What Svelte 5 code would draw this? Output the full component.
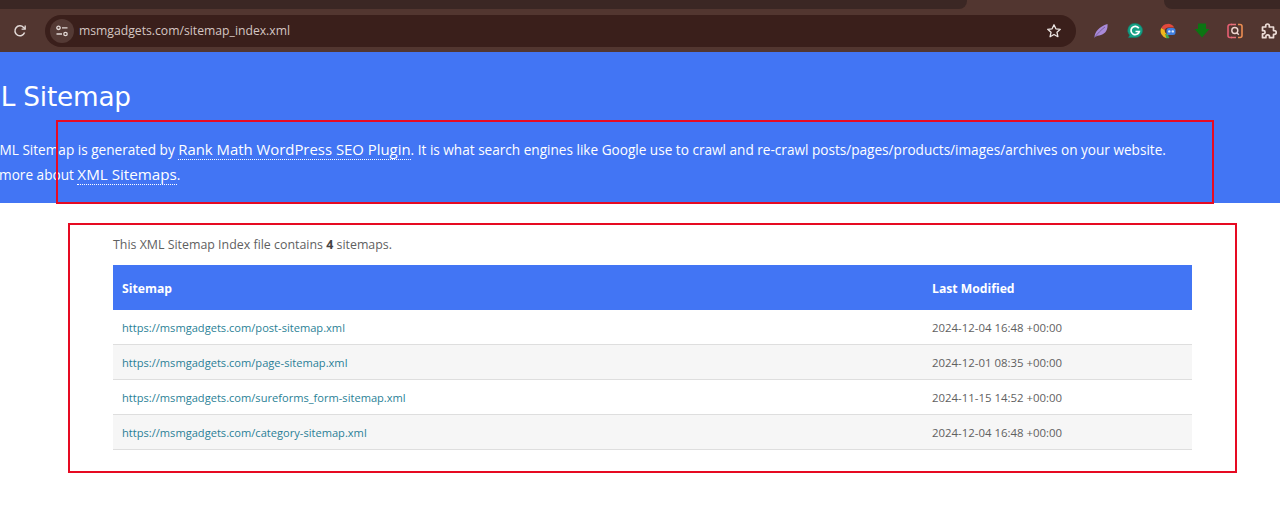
<script>
  const rows = [
    { url: 'https://msmgadgets.com/post-sitemap.xml', date: '2024-12-04 16:48 +00:00' },
    { url: 'https://msmgadgets.com/page-sitemap.xml', date: '2024-12-01 08:35 +00:00' },
    { url: 'https://msmgadgets.com/sureforms_form-sitemap.xml', date: '2024-11-15 14:52 +00:00' },
    { url: 'https://msmgadgets.com/category-sitemap.xml', date: '2024-12-04 16:48 +00:00' },
  ];
</script>

<div class="page">
  <div class="tabstrip">
    <span class="tab tab-a"></span>
    <span class="tab tab-b"></span>
  </div>

  <div class="toolbar">
    <svg class="reload" width="16" height="16" viewBox="0 0 16 16" fill="none" stroke="#e2d9d6" stroke-width="1.5">
      <path d="M12.6 9.6A5 5 0 1 1 11.6 4.4L13 5.8" />
      <path d="M13.2 2.6v3.6H9.6" stroke-width="1.3" />
    </svg>

    <div class="omnibox">
      <span class="tune">
        <svg width="16" height="16" viewBox="0 0 16 16" fill="none" stroke="#e2d9d6" stroke-width="1.3">
          <circle cx="4.5" cy="4.8" r="1.7" />
          <path d="M8 4.8h5.5M2.5 11h5.5" />
          <circle cx="11.5" cy="11" r="1.7" />
        </svg>
      </span>
      <span class="address">msmgadgets.com/sitemap_index.xml</span>
      <svg class="star" width="16" height="16" viewBox="0 0 16 16" fill="none" stroke="#eee7e4" stroke-width="1.3">
        <path d="M8 1.8l1.9 4 4.4.5-3.3 3 .9 4.4L8 11.5l-3.9 2.2.9-4.4-3.3-3 4.4-.5z" stroke-linejoin="round" />
      </svg>
    </div>

    <div class="extensions">
      <svg width="18" height="18" viewBox="0 0 18 18">
        <path d="M2.5 15.5C2.5 10 7 4.500 15.500 2c.5 5-1.500 9.500-6.500 11-2.500.7-4.500.6-6.500 2.500z" fill="#a98ad8" />
        <path d="M2.500 15.500C6 11 9 8 13 5" stroke="#6d5690" stroke-width="0.8" fill="none" />
      </svg>
      <svg width="18" height="18" viewBox="0 0 18 18">
        <path d="M9.500 1.500a7 7 0 1 1 0 14H2.500l1.200-2.200A7 7 0 0 1 9.500 1.500z" fill="#15a085" stroke="#0d7f6c" stroke-width="0.6" />
        <path d="M12.800 6.300A4.200 4.200 0 1 0 13.300 9.500H9.500" fill="none" stroke="#fff" stroke-width="1.700" />
      </svg>
      <svg width="18" height="18" viewBox="0 0 18 18">
        <path d="M2.200 6A7.400 7.400 0 0 1 15.200 5.500H9A3.400 3.400 0 0 0 5.800 8z" fill="#e2483d" />
        <path d="M2.200 6A7.400 7.400 0 0 0 7.500 16.200L10 12A3.400 3.400 0 0 1 5.800 8z" fill="#f2b71c" />
        <path d="M7.500 16.200A7.400 7.400 0 0 0 10.500 16L8.500 12.300 6 12z" fill="#3ea854" />
        <rect x="7.500" y="6" width="9" height="7" rx="2.500" fill="#3f7fe0" />
        <circle cx="10.300" cy="9.400" r="1.200" fill="#dcebff" />
        <circle cx="13.800" cy="9.400" r="1.200" fill="#dcebff" />
      </svg>
      <svg width="18" height="18" viewBox="0 0 18 18">
        <path d="M5 1.500h8v5.500h3.500L9 15.500 1.500 7H5z" fill="#0b7512" />
      </svg>
      <svg width="18" height="18" viewBox="0 0 18 18" fill="none">
        <path d="M6 2.500H4A2 2 0 0 0 2 4.500v9a2 2 0 0 0 2 2h2" stroke="#e65f72" stroke-width="1.600" />
        <path d="M12 2.500h2a2 2 0 0 1 2 2v9a2 2 0 0 1-2 2h-2" stroke="#eb8d52" stroke-width="1.600" />
        <path d="M5 2.500h5M5 15.500h5" stroke="#e6707a" stroke-width="1.600" />
        <circle cx="8.800" cy="8.500" r="3" stroke="#f0d6d0" stroke-width="1.400" />
        <path d="M10.800 10.800l2 2" stroke="#f0d6d0" stroke-width="1.400" />
      </svg>
      <svg width="18" height="18" viewBox="0 0 18 18" fill="none" stroke="#ecdcd6" stroke-width="1.700" stroke-linejoin="round">
        <path d="M2.500 5h3.200V3.800a1.800 1.800 0 0 1 3.600 0V5h4.200v3.600h.8a1.900 1.900 0 0 1 0 3.800h-.8v3.300H9.500v-1a1.800 1.800 0 0 0-3.600 0v1H2.500v-3.800h1a1.600 1.600 0 0 0 0-3.200h-1z" />
      </svg>
    </div>
  </div>

  <header class="hero">
    <div class="hero-inner">
      <h1>XML Sitemap</h1>
      <p>
        This XML Sitemap is generated by <a href="#rm">Rank Math WordPress SEO Plugin</a>. It is what search engines like Google use to crawl and re-crawl posts/pages/products/images/archives on your website.
      </p>
      <p class="more">Learn more about <a href="#xml">XML Sitemaps</a>.</p>
    </div>
  </header>

  <main class="content">
    <p class="intro">This XML Sitemap Index file contains <strong>4</strong> sitemaps.</p>
    <table>
      <thead>
        <tr>
          <th>Sitemap</th>
          <th class="date-col">Last Modified</th>
        </tr>
      </thead>
      <tbody>
        {#each rows as row}
          <tr>
            <td class="url-col"><a href={row.url}>{row.url}</a></td>
            <td class="date-col">{row.date}</td>
          </tr>
        {/each}
      </tbody>
    </table>
  </main>

  <div class="mark mark-top"></div>
  <div class="mark mark-bottom"></div>
</div>

<style>
  :global(body) {
    margin: 0;
    background: #fff;
  }

  .page {
    position: relative;
    width: 1280px;
    height: 510px;
    overflow: hidden;
    font-family: "Open Sans", "Noto Sans", sans-serif;
    color: #444;
  }

  .tabstrip {
    height: 10px;
    background: #523630;
    display: flex;
    justify-content: space-between;
  }

  .tab {
    height: 9px;
    background: #3b2724;
  }

  .tab-a {
    width: 967px;
    border-bottom-right-radius: 8px;
  }

  .tab-b {
    width: 116px;
    border-bottom-left-radius: 8px;
  }

  .toolbar {
    height: 42px;
    background: #523630;
    display: flex;
    align-items: center;
    padding-left: 12px;
  }

  .reload {
    flex: none;
  }

  .omnibox {
    margin-left: 17px;
    width: 1031px;
    height: 32px;
    border-radius: 16px;
    background: #3a1f1b;
    display: flex;
    align-items: center;
    padding: 0 14px 0 5px;
    box-sizing: border-box;
    flex: none;
  }

  .tune {
    width: 24px;
    height: 24px;
    border-radius: 50%;
    background: #543a35;
    display: flex;
    align-items: center;
    justify-content: center;
  }

  .address {
    margin: -2px 0 0 5px;
    font-size: 12.2px;
    color: #d5c6c2;
    flex: 1;
  }

  .extensions {
    flex: 1;
    display: flex;
    align-items: center;
    justify-content: space-between;
    padding: 0 2px 0 16px;
  }

  .hero {
    height: 151px;
    background: #4275f4;
    color: #fff;
    overflow: hidden;
  }

  .hero-inner {
    margin-left: -37.6px;
    width: 1280px;
    padding-top: 29px;
  }

  h1 {
    margin: 0 0 24px -2px;
    font-size: 26.3px;
    line-height: 32px;
    font-weight: 400;
    font-family: "DejaVu Sans", Verdana, sans-serif;
    letter-spacing: -0.2px;
  }

  .hero p {
    margin: 0;
    font-size: 13.6px;
    line-height: 25px;
    white-space: nowrap;
  }

  .hero p.more {
    margin-left: -3px;
  }

  .hero a {
    color: #fff;
    font-size: 14.9px;
    text-decoration: none;
    border-bottom: 1px dotted #fff;
  }

  .hero .more a {
    font-size: 15.2px;
  }

  .content {
    padding: 33px 88px 0 113px;
  }

  .intro {
    margin: 0 0 12px;
    font-size: 12.4px;
    line-height: 17px;
    color: #5f5f5f;
  }

  .intro strong {
    color: #444;
  }

  table {
    width: 100%;
    border-collapse: collapse;
    font-size: 11.4px;
  }

  th {
    background: #4275f4;
    color: #fff;
    height: 45px;
    padding: 2px 9px 0;
    box-sizing: border-box;
    text-align: left;
    font-size: 12.2px;
    font-weight: 700;
  }

  td {
    height: 34px;
    padding: 0 9px;
    border-bottom: 1px solid #dedede;
    color: #5f5f5f;
  }

  .url-col {
    font-size: 11.1px;
  }

  tbody tr:nth-child(even) td {
    background: #f6f6f6;
  }

  td a {
    color: #2a7f96;
    text-decoration: none;
  }

  .date-col {
    width: 251px;
  }

  .mark {
    position: absolute;
    border: 2px solid #e60a22;
    box-sizing: border-box;
    pointer-events: none;
  }

  .mark-top {
    left: 56px;
    top: 120px;
    width: 1158px;
    height: 84px;
  }

  .mark-bottom {
    left: 68px;
    top: 223px;
    width: 1169px;
    height: 250px;
  }
</style>
